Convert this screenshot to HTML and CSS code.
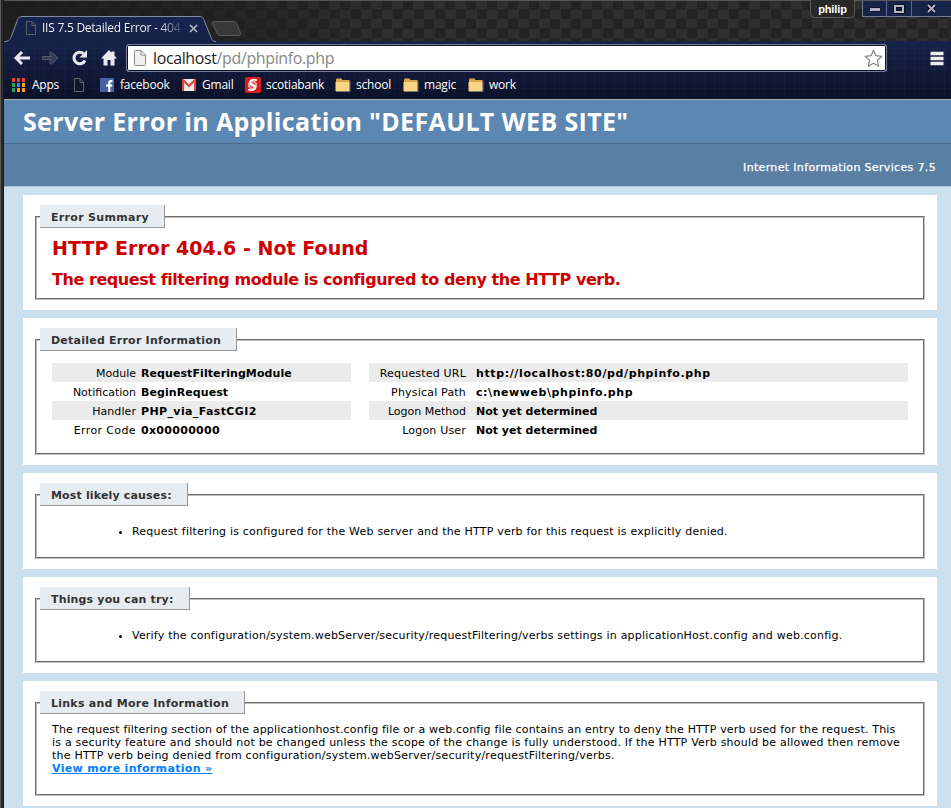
FILE: index.html
```
<!DOCTYPE html>
<html lang="en">
<head>
<meta charset="utf-8">
<title>IIS 7.5 Detailed Error - 404.6 - Not Found</title>
<link rel="stylesheet" href="styles.css">
</head>
<body>
<div class="window">
  <header class="chrome">
    <div class="titlebar">
      <svg class="tab-shape" width="242" height="28" viewBox="0 0 242 28">
        <defs><linearGradient id="tabfill" x1="0" y1="0" x2="0" y2="1"><stop offset="0" stop-color="#17254f"/><stop offset="1" stop-color="#152146"/></linearGradient></defs>
        <path d="M0 28V25.500C5 25.500 6 24 7.500 20L13.500 4C14.500 1.500 15.500 .5 18 .5H195C198 .5 199 1.500 200 4L206.500 20C208 24 208.500 25.500 212 25.500V28Z" fill="url(#tabfill)"/>
        <path d="M0 25.500C5 25.500 6 24 7.500 20L13.500 4C14.500 1.500 15.500 .5 18 .5H195C198 .5 199 1.500 200 4L206.500 20C208 24 208.500 25.500 212 25.500" fill="none" stroke="#848aa3"/>
        <path d="M209.500 5.500H229Q232 5.500 233 8L236.500 17Q237 19.500 235 19.500H216.500Q214 19.500 213 17L208.500 7.500Q208 5.500 209.500 5.500Z" fill="#393939" stroke="#5c5c5c"/>
      </svg>
      <div class="tab">
        <svg width="12" height="14" viewBox="0 0 12 14"><path d="M1.500.5H7L10.500 4V13.500H1.500ZM7 .5V4.500H10.500" fill="none" stroke="#5d5f68"/></svg>
        <span class="tab-title">IIS 7.5 Detailed Error - 404</span>
        <svg width="9" height="9" viewBox="0 0 9 9"><path d="M1 1L8 8M8 1L1 8" stroke="#aeb3c5" stroke-width="1.700"/></svg>
      </div>
      <div class="user">philip</div>
      <div class="controls">
        <span class="ctl ctl-min"><svg width="12" height="6" viewBox="0 0 12 6"><rect x=".5" y=".5" width="11" height="4" rx="1" fill="#aeb2c3" stroke="#090d1c"/></svg></span>
        <span class="ctl ctl-max"><svg width="12" height="10" viewBox="0 0 12 10"><rect x="2" y="2" width="8" height="6" fill="none" stroke="#090d1c" stroke-width="4"/><rect x="2" y="2" width="8" height="6" fill="none" stroke="#b1b5c5" stroke-width="2"/></svg></span>
        <span class="ctl ctl-close"><svg width="13" height="11" viewBox="0 0 13 11"><path d="M3 2L10 9M10 2L3 9" stroke="#080c1b" stroke-width="4"/><path d="M3 2L10 9M10 2L3 9" stroke="#b1b5c5" stroke-width="2"/></svg></span>
      </div>
    </div>
    <div class="toolbar">
      <svg class="back" width="16" height="14" viewBox="0 0 16 14"><path d="M8 1L2 7L8 13M2 7H16" fill="none" stroke="#e9e9ed" stroke-width="3"/></svg>
      <svg class="forward" width="17" height="14" viewBox="0 0 17 14"><path d="M.5 5.500H10L7 2.500L9 .7L16 7L9 13.300L7 11.500L10 8.500H.5Z" fill="#353a50" stroke="#555b74"/></svg>
      <svg class="reload" width="16" height="16" viewBox="0 0 16 16"><path d="M13 10.500A5.800 5.800 0 1 1 11.500 3.500" fill="none" stroke="#e9e9ed" stroke-width="3"/><path d="M15 0V7.500H7.500Z" fill="#e9e9ed"/></svg>
      <svg class="home" width="16" height="16" viewBox="0 0 16 16"><path d="M8 0L10.500 2.700V1.500H13.500V5.700L16 8.500H13.500V15.500H9.500V10H6.500V15.500H2.500V8.500H0Z" fill="#e9e9ed"/></svg>
      <div class="address">
        <svg width="12" height="16" viewBox="0 0 12 16"><path d="M.5 1.500Q.5.5 1.500.5H7L11.500 5V14.500Q11.500 15.500 10.500 15.500H1.500Q.5 15.500.5 14.500ZM7 .5V5H11.500" fill="#efefef" stroke="#8a8a8a"/></svg>
        <span class="url"><b>localhost</b>/pd/phpinfo.php</span>
        <svg class="star" width="19" height="19" viewBox="0 0 19 19"><path d="M9.500 1.200L11.900 6.700L17.900 7.300L13.400 11.300L14.700 17.200L9.500 14.200L4.300 17.200L5.600 11.300L1.100 7.300L7.100 6.700Z" fill="none" stroke="#858585" stroke-width="1.200" stroke-linejoin="round"/></svg>
      </div>
      <svg class="menu" width="14" height="15" viewBox="0 0 14 15"><path d="M.5 2.500H13.500M.5 7.500H13.500M.5 12.500H13.500" stroke="#ededf0" stroke-width="3.600"/></svg>
    </div>
    <nav class="bookmarks">
      <div class="bm apps"><svg width="13" height="14" viewBox="0 0 13 14"><path d="M0 2H3M5 2H8M10 2H13" stroke="#ee3f34" stroke-width="4"/><path d="M0 7H3M0 12H3" stroke="#2aa35a" stroke-width="4"/><path d="M5 7H8" stroke="#3f83ee" stroke-width="4"/><path d="M10 7H13M5 12H8M10 12H13" stroke="#f9a517" stroke-width="4"/><path d="M0 4.500H13M0 9.500H13" stroke="#10182f"/></svg><span>Apps</span></div>
      <div class="bm page"><svg width="10" height="14" viewBox="0 0 10 14"><path d="M.5.5H6L9.500 4V13.500H.5ZM6 .5V4.500H9.500" fill="none" stroke="#62646a"/></svg></div>
      <div class="bm fb"><svg width="14" height="14" viewBox="0 0 14 14"><rect width="14" height="14" fill="#4560a5"/><path d="M12.500 3.200H10.800Q9.300 3.200 9.300 4.800V14M6 7.500H12.300" fill="none" stroke="#fff" stroke-width="2.200"/></svg><span>facebook</span></div>
      <div class="bm gm"><svg width="14" height="12" viewBox="0 0 14 12"><rect width="14" height="12" rx="1" fill="#eee"/><path d="M1 12V1L7 7L13 1V12" fill="none" stroke="#d9483b" stroke-width="2.200"/></svg><span>Gmail</span></div>
      <div class="bm sc"><svg width="16" height="16" viewBox="0 0 16 16"><rect width="16" height="16" rx="2" fill="#da1d21"/><circle cx="7.500" cy="8" r="4.700" fill="#e9a9a8"/><path d="M12 3.200C7 1.500 4 4 5.500 6.500S11 8 10.500 10.500S6 14 3 12.500" fill="none" stroke="#fff" stroke-width="1.700"/><path d="M7 5.500Q10 5.500 10 8M5 9Q6 11 8 10.500" fill="none" stroke="#c91b20" stroke-width=".8"/></svg><span>scotiabank</span></div>
      <div class="bm f1"><svg width="16" height="14" viewBox="0 0 16 14"><path d="M1 2Q1 .5 2 .5H6.500L7.500 2H14.500V12.500H1Z" fill="#dca950"/><path d="M.5 4H14.500V13H.5Z" fill="#fbd584"/><path d="M15 3V13.500H1" fill="none" stroke="#777"/></svg><span>school</span></div>
      <div class="bm f2"><svg width="16" height="14" viewBox="0 0 16 14"><path d="M1 2Q1 .5 2 .5H6.500L7.500 2H14.500V12.500H1Z" fill="#dca950"/><path d="M.5 4H14.500V13H.5Z" fill="#fbd584"/><path d="M15 3V13.500H1" fill="none" stroke="#777"/></svg><span>magic</span></div>
      <div class="bm f3"><svg width="16" height="14" viewBox="0 0 16 14"><path d="M1 2Q1 .5 2 .5H6.500L7.500 2H14.500V12.500H1Z" fill="#dca950"/><path d="M.5 4H14.500V13H.5Z" fill="#fbd584"/><path d="M15 3V13.500H1" fill="none" stroke="#777"/></svg><span>work</span></div>
    </nav>
  </header>
  <main class="page-body">
    <h1><span>Server Error in Application "DEFAULT WEB SITE"</span></h1>
    <div class="server">Internet Information Services 7.5</div>
    <div class="content">
      <section class="panel"><fieldset class="summary"><legend class="w1">Error Summary</legend>
        <h2>HTTP Error 404.6 - Not Found</h2>
        <h3>The request filtering module is configured to deny the HTTP verb.</h3>
      </fieldset></section>
      <section class="panel"><fieldset class="details"><legend class="w2">Detailed Error Information</legend>
        <div class="tables">
          <dl class="left">
            <div><dt>Module</dt><dd class="s1">RequestFilteringModule</dd></div>
            <div><dt>Notification</dt><dd class="s1">BeginRequest</dd></div>
            <div><dt class="s1">Handler</dt><dd class="s4">PHP_via_FastCGI2</dd></div>
            <div><dt class="s4">Error Code</dt><dd class="s3">0x00000000</dd></div>
          </dl>
          <dl class="right">
            <div><dt class="s2">Requested URL</dt><dd class="s6">http://localhost:80/pd/phpinfo.php</dd></div>
            <div><dt class="s2">Physical Path</dt><dd class="s5">c:\newweb\phpinfo.php</dd></div>
            <div><dt>Logon Method</dt><dd>Not yet determined</dd></div>
            <div><dt class="s2">Logon User</dt><dd>Not yet determined</dd></div>
          </dl>
        </div>
      </fieldset></section>
      <section class="panel"><fieldset class="listed"><legend class="w3">Most likely causes:</legend>
        <ul><li>Request filtering is configured for the Web server and the HTTP verb for this request is explicitly denied.</li></ul>
      </fieldset></section>
      <section class="panel"><fieldset class="listed"><legend class="w4">Things you can try:</legend>
        <ul><li>Verify the configuration/system.webServer/security/requestFiltering/verbs settings in applicationHost.config and web.config.</li></ul>
      </fieldset></section>
      <section class="panel"><fieldset class="links"><legend class="w5">Links and More Information</legend>
        <p><span class="l1">The request filtering section of the applicationhost.config file or a web.config file contains an entry to deny the HTTP verb used for the request. This</span><br><span class="l2">is a security feature and should not be changed unless the scope of the change is fully understood. If the HTTP Verb should be allowed then remove</span><br><span class="l3">the HTTP verb being denied from configuration/system.webServer/security/requestFiltering/verbs.</span><br><a href="#">View more information »</a></p>
      </fieldset></section>
    </div>
  </main>
</div>
</body>
</html>
```
FILE: styles.css
```
* { box-sizing: border-box; }
body { margin: 0; width: 951px; height: 808px; overflow: hidden; background: #cbe1ef; font-family: "DejaVu Sans", Verdana, sans-serif; }
svg { display: block; flex: none; }
.window { height: 808px; overflow: hidden; padding-left: 4px; background: linear-gradient(90deg, #555652 1px, #2b2a28 1px 3px, #181816 3px 4px, #cbe1ef 4px); }
.chrome { height: 100px; border-bottom: 1px solid #a9a7a9; background-color: #101731;
  background-image: repeating-linear-gradient(90deg, rgba(70,95,160,.07) 0 1px, transparent 1px 10px), repeating-linear-gradient(0deg, rgba(70,95,160,.06) 0 1px, transparent 1px 10px), linear-gradient(#17234b 0 40px, #0c1127 99px); }
.titlebar { position: relative; display: flex; height: 41px; border-top: 1px solid #565856;
  background: linear-gradient(90deg, rgba(28,28,28,.9), rgba(30,30,30,.6) 240px, rgba(35,35,35,.1) 380px), conic-gradient(#303030 25%, #242424 0 50%, #303030 0 75%, #242424 0) 0 -1px / 21px 19px; }
.tab-shape { position: absolute; left: 0; top: 15px; }
.tab { position: relative; display: flex; align-items: center; width: 202px; height: 24px; margin-top: 15px; padding-left: 21px; }
.tab-title { width: 140px; margin: 0 7px 0 5px; overflow: hidden; font: 12px/18px "Open Sans", sans-serif; letter-spacing: -.25px; white-space: nowrap; color: transparent; background: linear-gradient(90deg, #fff 115px, rgba(255,255,255,.15) 140px); -webkit-background-clip: text; background-clip: text; }
.user { width: 45px; height: 18px; margin: -1px 7px 0 auto; border: 1px solid #5b5b5b; border-top: 0; border-radius: 0 0 5px 5px; background: #282828; color: #fff; font: bold 11px/18px "Liberation Sans", sans-serif; letter-spacing: -.1px; text-align: center; }
.controls { display: flex; width: 89px; height: 16px; border: solid #747b94; border-width: 0 0 1px 1px; background: #172349; }
.ctl { display: flex; align-items: center; justify-content: center; border-right: 1px solid #61698a; }
.ctl-min { width: 24px; padding-top: 3px; }
.ctl-max { width: 25px; }
.ctl-close { flex: 1; border: 0; }
.toolbar { display: flex; align-items: center; height: 34px; padding-left: 10px; }
.forward { margin-left: 12px; }
.reload { margin-left: 13px; }
.home { margin-left: 13px; }
.address { display: flex; align-items: center; width: 761px; height: 28px; margin-left: 9px; padding: 0 3px 0 7px; border: 1px solid #777d98; border-radius: 3px; background: #fff; box-shadow: inset 0 0 0 1px #0a1029; }
.url { margin-left: 7px; font: 16px/24px "Open Sans", sans-serif; letter-spacing: -.38px; color: #888; }
.url b { font-weight: 400; color: #1c1c1c; }
.star { margin-left: auto; }
.menu { margin-left: 43px; }
.bookmarks { display: flex; height: 22px; padding-left: 8px; color: #fff; font: 12px/20px "Open Sans", sans-serif; }
.bm { display: flex; align-items: center; gap: 6px; height: 20px; white-space: nowrap; letter-spacing: -.22px; }
.apps { width: 62px; gap: 7px; }
.page { width: 26px; }
.fb { width: 82px; }
.gm { width: 63px; }
.sc { width: 90px; gap: 5px; }
.f1, .f2, .f3 { gap: 5px; }
.f1 { width: 68px; }
.f2 { width: 65px; }
h1 { height: 44px; margin: 0; padding-left: 19px; border-bottom: 1px solid #4b6c8f; background: #5c87b2; color: #fff; font: 700 25px/42px "Open Sans", sans-serif; letter-spacing: .35px; white-space: nowrap; }
.server { height: 43px; padding-right: 15px; border-bottom: 1px solid #a6bfd4; background: #5a7fa5; color: #fff; font-size: 11px; line-height: 48px; text-align: right; letter-spacing: .34px; -webkit-text-stroke: .25px #fff; }
.content { display: flex; flex-direction: column; gap: 8px; padding: 8px 14px 0 19px; }
.panel { padding: 10px 12px; background: #fff; }
fieldset { min-width: 0; margin: 0; padding: 0 15px; border: 2px groove #c0c0c0; }
legend { height: 23px; margin-left: -12px; padding: 0 0 0 11px; background: #e7ecf0; border: solid #969696; border-width: 0 1px 1px 0; color: #333; font-size: 11px; font-weight: 700; line-height: 25px; white-space: nowrap; }
.w1 { width: 125px; letter-spacing: .31px; }
.w2 { width: 197px; letter-spacing: .23px; }
.w3 { width: 148px; letter-spacing: .16px; }
.w4 { width: 150px; letter-spacing: .16px; }
.w5 { width: 205px; letter-spacing: .25px; }
.summary { height: 95px; }
.details { height: 127px; }
.listed { height: 76px; }
.links { height: 105px; }
h2 { margin: 7px 0 0; font-size: 19px; line-height: 26px; letter-spacing: .04px; color: #c00; white-space: nowrap; }
h3 { margin: 6px 0 0; font-size: 16px; line-height: 26px; letter-spacing: -.44px; color: #c00; white-space: nowrap; }
.tables { display: flex; gap: 18px; margin-top: 12px; font-size: 11px; line-height: 21px; }
dl { margin: 0; }
dl > div { display: flex; height: 19px; }
dl > div:nth-child(odd) { background: #ebebeb; }
dt { text-align: right; white-space: nowrap; }
dd { margin: 0; font-weight: 700; white-space: nowrap; }
.left { width: 299px; } .left dt { width: 84px; margin-right: 5px; }
.right { width: 539px; } .right dt { width: 97px; margin-right: 10px; }
.s1 { letter-spacing: .08px; }
.s2 { letter-spacing: .19px; }
.s3 { letter-spacing: .3px; }
.s4 { letter-spacing: .38px; }
.s5 { letter-spacing: .57px; }
.s6 { letter-spacing: .62px; }
ul { margin: 19px 0 0; padding-left: 80px; font-size: 11px; line-height: 14px; letter-spacing: .205px; white-space: nowrap; }
p { margin: 9px 0 0; font-size: 11px; line-height: 13px; white-space: nowrap; }
.l1 { letter-spacing: .18px; }
.l2 { letter-spacing: .212px; }
.l3 { letter-spacing: .242px; }
a { color: #007eff; font-weight: 700; letter-spacing: .33px; }
```
